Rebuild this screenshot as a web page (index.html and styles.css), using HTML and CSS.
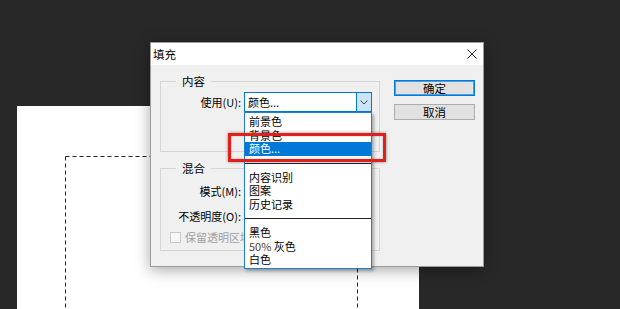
FILE: index.html
```html
<!DOCTYPE html>
<html lang="zh-CN">
<head>
  <meta charset="UTF-8">
  <title>填充</title>
  <link rel="stylesheet" href="styles.css">
</head>
<body>
  <div class="doc">
    <svg class="ants" width="402" height="203" viewBox="0 0 402 203">
      <line x1="48.5" y1="50.5" x2="402" y2="50.5" />
      <line x1="48.5" y1="50.5" x2="48.5" y2="203" />
      <line x1="340.5" y1="50.5" x2="340.5" y2="203" />
    </svg>
  </div>

  <div class="dialog">
    <div class="titlebar">
      <span>填充</span>
      <svg class="close" width="10" height="10" viewBox="0 0 10 10">
        <path d="M0.5 0.5 L9.5 9.5 M9.5 0.5 L0.5 9.5" />
      </svg>
    </div>

    <div class="body">
      <div class="groups">
        <fieldset class="group group-content">
          <legend>内容</legend>
          <div class="row">
            <label>使用(<u>U</u>):</label>
            <div class="select">
              <span class="value">颜色...</span>
              <span class="arrow">
                <svg width="8" height="5" viewBox="0 0 8 5"><path d="M0.5 0.5 L4 4 L7.5 0.5" /></svg>
              </span>
              <ul class="menu">
                <li>前景色</li>
                <li>背景色</li>
                <li class="active">颜色...</li>
                <li class="sep"></li>
                <li>内容识别</li>
                <li>图案</li>
                <li>历史记录</li>
                <li class="sep"></li>
                <li>黑色</li>
                <li><span class="num">50%</span> 灰色</li>
                <li>白色</li>
              </ul>
            </div>
          </div>
        </fieldset>

        <fieldset class="group group-blend">
          <legend>混合</legend>
          <div class="row">
            <label>模式(<u>M</u>):</label>
            <div></div>
          </div>
          <div class="row">
            <label>不透明度(<u>O</u>):</label>
            <div></div>
          </div>
          <div class="check">
            <span class="box"></span>
            <span>保留透明区域</span>
          </div>
        </fieldset>
      </div>

      <div class="buttons">
        <button class="btn primary">确定</button>
        <button class="btn">取消</button>
      </div>
    </div>
  </div>

  <div class="callout"></div>
</body>
</html>
```

FILE: styles.css
```css
body {
  margin: 0;
  width: 620px;
  height: 309px;
  overflow: hidden;
  position: relative;
  background: #282828;
  font-family: "Noto Sans CJK SC", "Liberation Sans", sans-serif;
  font-size: 11px;
  color: #000;
}
.doc {
  position: absolute;
  left: 17px;
  top: 106px;
  width: 402px;
  height: 203px;
  background: #fff;
}
.ants {
  display: block;
}
.ants line {
  stroke: #222;
  stroke-width: 1;
  stroke-dasharray: 4 3;
}
.dialog {
  position: absolute;
  left: 150px;
  top: 42px;
  width: 334px;
  height: 225px;
  box-sizing: border-box;
  border: 1px solid #9c9c9c;
  background: #f0f0f0;
  box-shadow: 0 3px 14px rgba(0,0,0,0.35);
}
.titlebar {
  height: 22px;
  background: #fff;
  display: flex;
  align-items: center;
  justify-content: space-between;
  padding: 0 6px 0 2px;
  font-size: 11.5px;
}
.close path {
  stroke: #222;
  stroke-width: 1;
  fill: none;
}
.body {
  display: flex;
  gap: 14px;
  padding: 8px 0 0 9px;
}
.groups {
  display: flex;
  flex-direction: column;
  gap: 8px;
}
.group {
  margin: 0;
  width: 220px;
  box-sizing: border-box;
  border: 1px solid #d5d5d5;
  padding: 0;
  min-width: 0;
}
.group legend {
  margin-left: 15px;
  padding: 0 6px;
  line-height: 16px;
  font-size: 11.5px;
}
.group-content {
  height: 79px;
  padding-top: 3px;
}
.group-blend {
  height: 91px;
  padding-top: 5px;
}
.row {
  display: grid;
  grid-template-columns: 80px 128px;
  column-gap: 3px;
  height: 20px;
  align-items: center;
}
.group-blend .row + .row {
  margin-top: 5px;
}
.row label {
  text-align: right;
  white-space: nowrap;
}
.row u {
  text-decoration: none;
}
.select {
  position: relative;
  height: 20px;
  box-sizing: border-box;
  border: 1px solid #0078d7;
  background: #fff;
  display: flex;
  align-items: center;
}
.select .value {
  flex: 1;
  padding-left: 3px;
}
.select .arrow {
  width: 14px;
  height: 18px;
  background: #cce4f7;
  border-left: 1px solid #0078d7;
  display: flex;
  align-items: center;
  justify-content: center;
}
.arrow path {
  stroke: #444;
  fill: none;
  stroke-width: 1;
}
.menu {
  position: absolute;
  left: -1px;
  top: 19px;
  width: 128px;
  height: 157px;
  box-sizing: border-box;
  margin: 0;
  padding: 2px 0;
  list-style: none;
  background: #fff;
  border: 1px solid #1f80d3;
  box-shadow: 2px 2px 3px rgba(0,0,0,0.3);
  z-index: 2;
}
.menu li {
  height: 13.5px;
  line-height: 13.5px;
  padding-left: 4px;
  white-space: nowrap;
}
.menu li.active {
  background: #0078d7;
  color: #fff;
}
.menu li.sep {
  height: 15px;
  padding: 0;
  position: relative;
}
.menu li.sep::after {
  content: "";
  position: absolute;
  left: 0;
  right: 0;
  top: 7px;
  border-top: 1px solid #222;
}
.menu .num {
  color: #5a3a18;
}
.check {
  display: flex;
  align-items: center;
  gap: 4px;
  margin-top: 3px;
  padding-left: 9px;
  height: 16px;
  color: #a0a0a0;
}
.check .box {
  width: 11px;
  height: 11px;
  box-sizing: border-box;
  border: 1px solid #c8c8c8;
  background: #f7f7f7;
}
.buttons {
  display: flex;
  flex-direction: column;
  gap: 8px;
  padding-top: 7px;
}
.btn {
  width: 81px;
  height: 16px;
  padding: 0;
  margin: 0;
  box-sizing: border-box;
  border: 1px solid #adadad;
  background: #e1e1e1;
  font-family: inherit;
  font-size: 11.5px;
  line-height: 14px;
  color: #000;
}
.btn.primary {
  border-color: #0078d7;
  box-shadow: inset 0 0 0 1px #4aa0e6;
}
.callout {
  position: absolute;
  left: 228px;
  top: 133px;
  width: 158px;
  height: 29px;
  box-sizing: border-box;
  border: 3px solid #e0201c;
  box-shadow: 0 0 3px rgba(0,0,0,0.45), inset 0 0 2px rgba(0,0,0,0.3);
  z-index: 3;
}
```
